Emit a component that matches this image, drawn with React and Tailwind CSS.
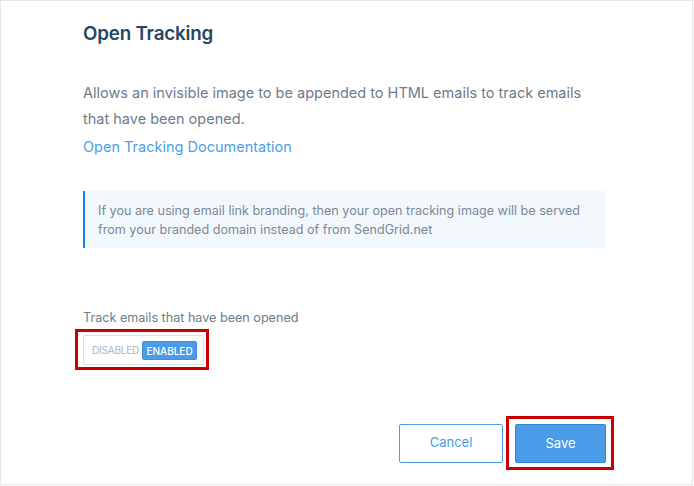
import { useState } from "react";

export default function App() {
  const [enabled, setEnabled] = useState(true);

  return (
    <div
      className="w-[694px] h-[486px] bg-white"
      style={{ fontFamily: "Inter, 'Open Sans', sans-serif" }}
    >
      <div className="w-[693px] h-[485px] border border-[#e6e6e6] flex flex-col pl-[82px] pr-[86px]">
        <h1 className="pt-[21px] text-[18.8px] leading-[24px] font-semibold text-[#294661] tracking-[-0.2px]">
          Open Tracking
        </h1>

        <p className="mt-[34px] text-[14.5px] leading-[26px] text-[#6b7c8d]">
          Allows an invisible image to be appended to HTML emails to track emails that have been opened.
        </p>
        <a href="#" className="mt-[2px] text-[14.5px] leading-[26px] text-[#4c9fe9] self-start">
          Open Tracking Documentation
        </a>

        <div className="mt-[31px] border-l-2 border-[#1a82e2] bg-[#f3f8fd] pl-[13px] pr-4 pt-[10px] pb-[9px] text-[12.6px] leading-[19px] text-[#7a8897]">
          If you are using email link branding, then your open tracking image will be served from your branded domain instead of from SendGrid.net
        </div>

        <div className="mt-[61px] text-[12.6px] leading-[18px] text-[#6b7c8d]">
          Track emails that have been opened
        </div>

        <div className="mt-[2px] ml-[-8px] self-start border-[3px] border-[#c80000] pl-[5px] pr-[2px] pt-[3px] pb-[2px]">
          <div className="flex items-center h-[30px] w-[121px] border border-[#d8dde3] rounded-[2px] pl-[8px] pr-[4px]">
            <button
              onClick={() => setEnabled(false)}
              className={`text-[10px] leading-[19px] tracking-[-0.2px] ${
                enabled ? "text-[#a9b3bd]" : "bg-[#4a9ce8] text-white px-[3px] rounded-[2px]"
              }`}
            >
              DISABLED
            </button>
            <button
              onClick={() => setEnabled(true)}
              className={`ml-[3px] h-[19px] w-[55px] text-[10px] leading-[19px] font-medium ${
                enabled ? "bg-[#4a9ce8] text-white rounded-[2px] border border-[#3d8fdd]" : "text-[#a9b3bd]"
              }`}
            >
              ENABLED
            </button>
          </div>
        </div>

        <div className="mt-auto mb-[14px] mr-[-8px] flex justify-end items-center gap-[3px]">
          <button className="w-[104px] h-[39px] border border-[#4a9ce8] rounded-[2px] text-[13px] text-[#4a9ce8]">
            Cancel
          </button>
          <div className="border-[3px] border-[#c80000] pl-[6px] pr-[5px] pt-[5px] pb-[4px]">
            <button className="block w-[91px] h-[39px] bg-[#4a9ce8] border border-[#2f86d6] rounded-[2px] text-[13px] text-white">
              Save
            </button>
          </div>
        </div>
      </div>
    </div>
  );
}
